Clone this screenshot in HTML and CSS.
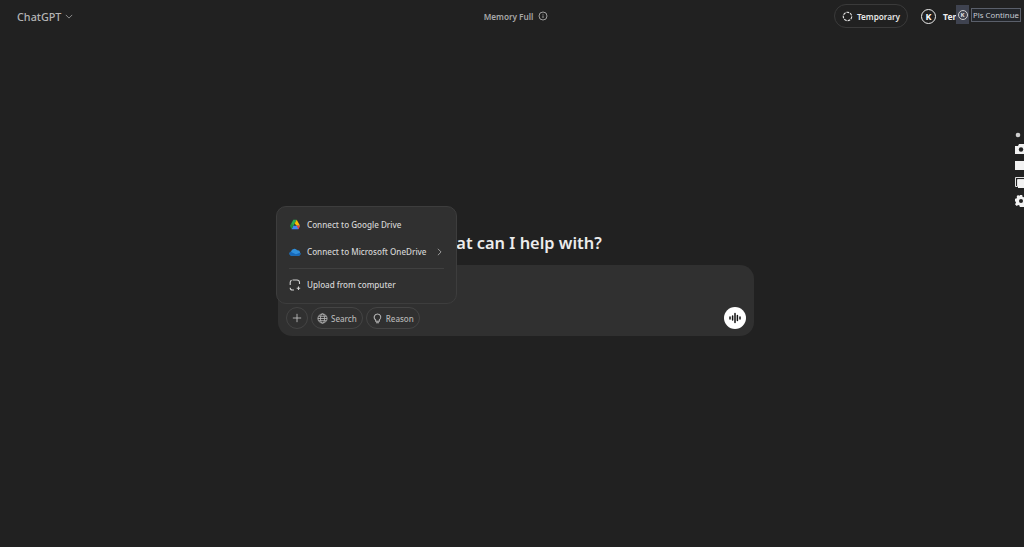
FILE: index.html
```html
<!DOCTYPE html>
<html lang="en">
<head>
<meta charset="utf-8">
<title>ChatGPT</title>
<link rel="stylesheet" href="styles.css">
</head>
<body>
<header class="topbar">
  <div class="brand"><span>ChatGPT</span>
    <svg class="chev" viewBox="0 0 10 6" width="8" height="5"><path d="M1 1l4 4 4-4" fill="none" stroke="#9a9a9a" stroke-width="1.1"/></svg>
  </div>
  <div class="memory"><span>Memory Full</span>
    <svg viewBox="0 0 12 12" width="10" height="10"><circle cx="6" cy="6" r="4.8" fill="none" stroke="#b4b4b4" stroke-width="1"/><path d="M6 5.4v3M6 3.4v1" stroke="#b4b4b4" stroke-width="1"/></svg>
  </div>
  <div class="account">
    <div class="temp">
      <svg viewBox="0 0 12 12" width="11" height="11"><circle cx="6" cy="6" r="4.6" fill="none" stroke="#e6e6e6" stroke-width="1.2" stroke-dasharray="3 1"/></svg>
      <span>Temporary</span>
    </div>
    <div class="avatar">K</div>
    <span class="name">Ten</span>
  </div>
</header>

<main class="main">
  <h1 class="title">What can I help with?</h1>
  <section class="composer">
    <div class="tools">
      <button class="chip round">
        <svg viewBox="0 0 12 12" width="10" height="10"><path d="M6 1v10M1 6h10" stroke="#c4c4c4" stroke-width="1"/></svg>
      </button>
      <button class="chip">
        <svg viewBox="0 0 12 12" width="11" height="11"><g fill="none" stroke="#b8b8b8" stroke-width=".9"><circle cx="6" cy="6" r="5"/><ellipse cx="6" cy="6" rx="2.2" ry="5"/><path d="M1 6h10M1.8 3.6h8.4M1.8 8.4h8.4"/></g></svg>
        <span>Search</span>
      </button>
      <button class="chip">
        <svg viewBox="0 0 12 12" width="11" height="11"><path d="M6 1a3.6 3.6 0 0 0-2 6.6V9h4V7.6A3.6 3.6 0 0 0 6 1zM4.4 10.600h3.200" fill="none" stroke="#b8b8b8" stroke-width="1.100"/></svg>
        <span>Reason</span>
      </button>
    </div>
    <button class="voice">
      <svg viewBox="0 0 14 14" width="14" height="14"><path d="M2 6v2M4.600 5v4M7 2.500v9M9.400 4.500v5M12 6v2" stroke="#111" stroke-width="1.500" stroke-linecap="round"/></svg>
    </button>
  </section>
</main>

<div class="menu">
  <div class="item">
    <svg viewBox="0 0 14 13" width="12" height="11"><path d="M5 1h4L6.600 5.200 4.600 8.800 2.600 5.200z" fill="#2da94f"/><path d="M9 1l4 7H9L6.600 5.200z" fill="#fbbc04"/><path d="M13 8l-2 4H3l2-4z" fill="#4285f4"/><path d="M5 8l-2 4-2-4 2-3.400z" fill="#1e8e3e"/><path d="M9 8l2 4 2-4z" fill="#ea4335"/></svg>
    <span>Connect to Google Drive</span>
  </div>
  <div class="item">
    <svg viewBox="0 0 14 9" width="12" height="8"><path d="M3 9a2.600 2.600 0 0 1-.6-5.100A4 4 0 0 1 9.600 2.600 3 3 0 0 1 13 5.400 2.400 2.400 0 0 1 11.600 9z" fill="#2f8fdc"/><path d="M3 9a2.600 2.600 0 0 1-1-4.900L8 7l5-1.600a2.400 2.400 0 0 1-1.400 3.600z" fill="#1667b8"/></svg>
    <span>Connect to Microsoft OneDrive</span>
    <svg class="go" viewBox="0 0 6 10" width="5" height="8"><path d="M1 1l4 4-4 4" fill="none" stroke="#a8a8a8" stroke-width="1.100"/></svg>
  </div>
  <div class="rule"></div>
  <div class="item">
    <svg viewBox="0 0 12 12" width="12" height="12"><path d="M3.500 1H8a2.500 2.500 0 0 1 2.500 2.500V5M1.200 6V3.500C1.200 2.500 1.800 1.600 2.600 1.200M5 11H3.500a2.300 2.300 0 0 1-2.300-2.300" fill="none" stroke="#cfcfcf" stroke-width="1.100"/><path d="M9.500 7.500v3.500M7.700 9.200h3.500" stroke="#cfcfcf" stroke-width="1.100"/></svg>
    <span>Upload from computer</span>
  </div>
</div>

<div class="overlay-k"><span>K</span></div>
<div class="overlay-tip">Pls Continue</div>

<aside class="side">
  <svg class="pin" viewBox="0 0 6 6" width="6" height="6"><circle cx="3" cy="3" r="2.300" fill="#cfcfcf"/></svg>
  <svg viewBox="0 0 12 10" width="12" height="10"><path d="M0 2h3l1-2h5v2h3v8H0z" fill="#f2f2f2"/><circle cx="6" cy="5.500" r="2.200" fill="#212121"/></svg>
  <div class="box"></div>
  <svg viewBox="0 0 12 11" width="12" height="11"><path d="M.5 .5h11v2h-9v7h-2z" fill="none" stroke="#e0e0e0"/><path d="M3 3h9v8H3z" fill="#f2f2f2"/></svg>
  <svg viewBox="0 0 12 12" width="12" height="12"><path d="M4.800 0h2.400l.3 1.700 1.300.6L10.300 1.300 12 3l-1 1.500.5 1.300H12v2.400l-1.500.3-.5 1.300 1 1.500-1.700 1.700-1.500-1-1.300.5L7.200 12H4.800l-.3-1.500-1.300-.5-1.500 1L0 9.300l1-1.500-.5-1.300L0 6.200V3.800l1.500-.3L2 2.200 1.700 1.300 3 0l1.500 1z" fill="#f2f2f2"/><circle cx="6" cy="6" r="2" fill="#212121"/></svg>
</aside>
```

FILE: styles.css
```css
* { box-sizing: border-box; }
html, body { height: 100%; }
body {
  margin: 0;
  height: 547px;
  overflow: hidden;
  position: relative;
  background: #212121;
  color: #ececec;
  font-family: "Noto Sans", "Open Sans", sans-serif;
}
.topbar {
  display: grid;
  grid-template-columns: 1fr auto 1fr;
  align-items: center;
  height: 32px;
  padding: 0 0 0 17px;
}
.brand {
  display: flex;
  align-items: center;
  gap: 4px;
  font-size: 10.800px;
  font-weight: 500;
  color: #b4b4b4;
}
.memory {
  display: flex;
  align-items: center;
  gap: 5px;
  font-size: 8.200px;
  font-weight: 600;
  color: #a8a8a8;
  margin-left: -9px;
}
.account {
  display: flex;
  align-items: center;
  justify-content: flex-end;
  padding-right: 66px;
}
.temp {
  display: flex;
  align-items: center;
  gap: 4px;
  height: 24px;
  padding: 0 7px;
  border: 1px solid #3a3a3a;
  border-radius: 12px;
  font-size: 8.200px;
  font-weight: 600;
  color: #e6e6e6;
}
.avatar {
  width: 15px;
  height: 15px;
  margin-left: 13px;
  border: 1px solid #ececec;
  border-radius: 50%;
  font-size: 9px;
  font-weight: 700;
  line-height: 13px;
  text-align: center;
  color: #fff;
}
.name {
  margin-left: 7px;
  font-size: 8.500px;
  font-weight: 700;
  color: #ececec;
}
.main {
  display: flex;
  flex-direction: column;
  align-items: center;
  padding: 199px 0 0 8px;
}
.title {
  margin: 0 0 10px;
  height: 24px;
  font-size: 16.400px;
  font-weight: 600;
  line-height: 24px;
  color: #ececec;
}
.composer {
  display: flex;
  align-items: flex-end;
  justify-content: space-between;
  width: 476px;
  height: 71px;
  padding: 0 8px 7px;
  background: #303030;
  border-radius: 14px;
}
.tools {
  display: flex;
  gap: 3px;
}
.chip {
  display: flex;
  align-items: center;
  gap: 3px;
  height: 22px;
  padding: 0 5px;
  background: none;
  border: 1px solid #444;
  border-radius: 11px;
  font: 500 8px "Noto Sans", sans-serif;
  color: #b4b4b4;
}
.chip.round {
  width: 22px;
  padding: 0;
  justify-content: center;
}
.voice {
  display: flex;
  align-items: center;
  justify-content: center;
  width: 22px;
  height: 22px;
  padding: 0;
  border: 0;
  border-radius: 50%;
  background: #fff;
}
.menu {
  position: absolute;
  left: 276px;
  top: 206px;
  width: 181px;
  height: 98px;
  padding: 4px 12px 0;
  background: #303030;
  border: 1px solid #3d3d3d;
  border-radius: 10px;
  font-size: 8.100px;
  font-weight: 500;
  color: #d4d4d4;
}
.item {
  display: flex;
  align-items: center;
  gap: 6px;
  height: 27px;
  white-space: nowrap;
}
.item svg { flex: none; }
.item .go { margin-left: 5px; }
.rule {
  height: 1px;
  margin: 3px 0 2px;
  background: #404040;
}
.overlay-k {
  position: absolute;
  left: 956px;
  top: 5px;
  width: 13px;
  height: 19px;
  display: flex;
  align-items: center;
  justify-content: center;
  background: #3f4350;
}
.overlay-k span {
  width: 10px;
  height: 10px;
  border: 1px solid #d0d0d0;
  border-radius: 50%;
  font-size: 6px;
  font-weight: 700;
  line-height: 8px;
  text-align: center;
  color: #e0e0e0;
}
.overlay-tip {
  position: absolute;
  left: 971px;
  top: 8px;
  width: 50px;
  height: 14px;
  border: 1px solid #5a5f6a;
  background: #23262b;
  font-size: 7.800px;
  line-height: 12px;
  text-align: center;
  color: #c8ccd4;
  white-space: nowrap;
}
.side {
  position: absolute;
  left: 1015px;
  top: 132px;
  display: flex;
  flex-direction: column;
  gap: 7px;
  width: 12px;
}
.side svg { display: block; flex: none; }
.side .pin { margin: 0 0 -1px 0; }
.side .box {
  height: 9px;
  width: 12px;
  background: #f2f2f2;
}
```
